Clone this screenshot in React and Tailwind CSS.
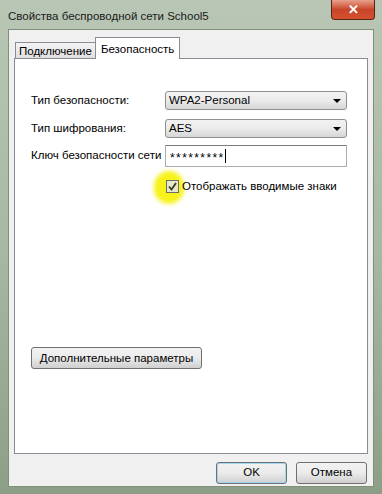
function Select({ value }) {
  return (
    <div className="flex h-[19px] w-[182px] items-center justify-between rounded-[3px] border border-[#8e8f8f] bg-linear-to-b from-[#f2f2f2] via-[#ebebeb] to-[#d6d6d6] pl-[3px] pr-[5px]">
      <span>{value}</span>
      <span className="h-0 w-0 border-x-[4px] border-t-[4px] border-x-transparent border-t-black" />
    </div>
  );
}

function WinButton({ children, className = "" }) {
  return (
    <button
      type="button"
      className={
        "flex h-[22px] items-center justify-center whitespace-nowrap rounded-[3px] border border-[#707070] bg-linear-to-b from-[#f2f2f2] via-[#ebebeb] to-[#cfcfcf] text-[11.5px] text-black " +
        className
      }
    >
      {children}
    </button>
  );
}

export default function App() {
  return (
    <div className="flex h-[494px] w-[382px] flex-col whitespace-nowrap bg-linear-to-b from-[#b9c6b5] via-[#a8b8a3] to-[#8c9f86] px-[8px] pb-[7px] font-['Liberation_Sans',Arial,sans-serif] text-[11.5px] text-black">
      {/* title bar */}
      <div className="flex h-[29px] items-start justify-between">
        <span className="mt-[8px] text-[11.5px] text-[#1a1a1a]">Свойства беспроводной сети School5</span>
        <div className="mr-[-1px] flex h-[20px] w-[44px] items-center justify-center rounded-b-[4px] border border-t-0 border-[#5b2318] bg-linear-to-b from-[#e6a08c] via-[#c8452a] to-[#d4512f] text-[13px] font-bold text-white">
          ✕
        </div>
      </div>

      {/* client area */}
      <div className="flex flex-1 flex-col border border-[#7f8f7c] bg-[#f0f0f0] px-[5px] pt-[7px]">
        {/* tabs */}
        <div className="flex h-[21px] items-end pl-[1px]">
          <div className="flex h-[16px] items-center border border-b-0 border-r-0 border-[#898c95] bg-linear-to-b from-[#f3f3f3] to-[#e0e0e0] px-[3px] pt-[2px]">
            Подключение
          </div>
          <div className="relative z-10 -mb-px flex h-[22px] items-start border border-b-0 border-[#898c95] bg-white px-[5px] pt-[3px]">
            Безопасность
          </div>
        </div>

        {/* panel */}
        <div className="relative flex h-[396px] flex-col border border-[#898c95] bg-white px-[16px] pt-[32px]">
          <div className="grid grid-cols-[134px_182px] items-center gap-y-[9px]">
            <span>Тип безопасности:</span>
            <Select value="WPA2-Personal" />
            <span>Тип шифрования:</span>
            <Select value="AES" />
            <span className="-mt-[2px]">Ключ безопасности сети</span>
            <div className="-mt-[2px] flex h-[22px] items-center border border-[#abadb3] border-t-[#7a7a7a] bg-white pl-[4px]">
              <span className="mt-[3px] text-[12px] tracking-[1.4px]">*********</span>
              <span className="h-[14px] w-px bg-black" />
            </div>
          </div>

          <div className="relative mt-[11px] ml-[135px] flex items-center gap-[3px]">
            <span className="absolute left-[-12px] top-[-7px] h-[33px] w-[30px] rounded-full bg-[#f7f21a] blur-[2px]" />
            <span className="relative flex h-[13px] w-[13px] items-center justify-center border border-[#6e6e6e] bg-[#e8e8c8]">
              <svg width="9" height="9" viewBox="0 0 9 9">
                <path d="M1 4.5 L3.5 7.5 L8 1" stroke="#2f3f2f" strokeWidth="1.8" fill="none" />
              </svg>
            </span>
            <span className="relative">Отображать вводимые знаки</span>
          </div>

          <WinButton className="mt-[152px] w-[171px]">Дополнительные параметры</WinButton>
        </div>

        {/* buttons */}
        <div className="flex justify-end gap-[9px] pr-[1px] pt-[8px]">
          <WinButton className="w-[71px] border-[#3c7fb1] shadow-[inset_0_0_0_1px_#9fd6f3]">OK</WinButton>
          <WinButton className="w-[71px]">Отмена</WinButton>
        </div>
      </div>
    </div>
  );
}
